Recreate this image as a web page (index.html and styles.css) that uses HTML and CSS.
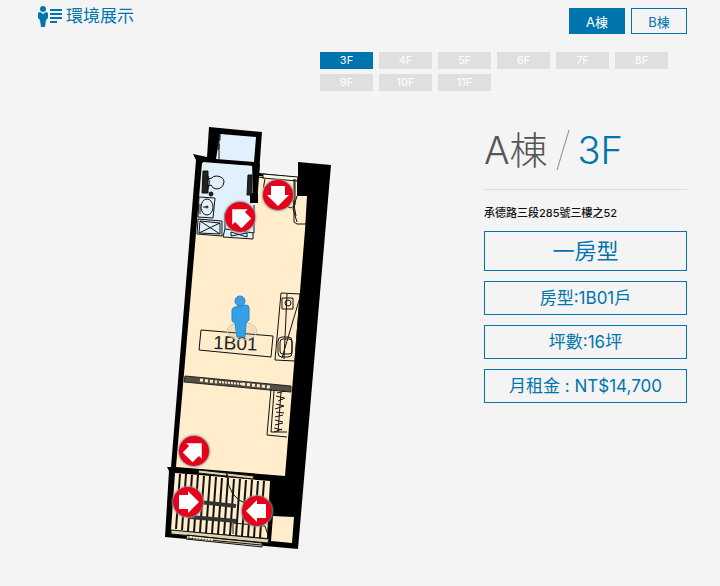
FILE: index.html
```html
<!DOCTYPE html>
<html lang="zh-Hant">
<head>
    <meta charset="UTF-8">
    <meta name="viewport" content="width=device-width, initial-scale=1.0">
    <title>環境展示</title>
    <link rel="stylesheet" href="styles.css">
</head>
<body>
    <div class="container">
        <header class="header">
            <h1 class="title">
                <svg class="title-icon" width="26" height="22" viewBox="0 0 26 22" aria-hidden="true">
                    <circle cx="5" cy="4" r="3"/>
                    <path d="M2 7l3 2 3-2q2 0 2 2v4l-2 2-1 7H3l-1-7-2-2V9q0-2 2-2z"/>
                    <path d="M12 4h12v2H12zM12 8h12v2H12zM12 12h12v2H12zM12 16h7v2h-7z"/>
                </svg>
                環境展示
            </h1>
            <nav class="buildings">
                <button type="button" class="building active">A棟</button>
                <button type="button" class="building">B棟</button>
            </nav>
        </header>

        <nav class="floors">
            <button type="button" class="floor active">3F</button>
            <button type="button" class="floor">4F</button>
            <button type="button" class="floor">5F</button>
            <button type="button" class="floor">6F</button>
            <button type="button" class="floor">7F</button>
            <button type="button" class="floor">8F</button>
            <button type="button" class="floor">9F</button>
            <button type="button" class="floor">10F</button>
            <button type="button" class="floor">11F</button>
        </nav>

        <main class="main">
            <div class="plan-area">
                <div class="plan">
                    <svg class="plan-drawing" viewBox="160 120 180 436" role="img" aria-label="1B01 平面圖">
                        <!-- walls -->
                        <path d="M209 127L262 132L259 173L298 177L298 162L331 165L298 549L165 537L169 471L167 467L171 467L196 160L193 154L207 157Z"/>
                        <!-- floors -->
                        <path class="room" d="M202 163L252 166L259 176L297 180L297 196L307 196L305 230L285 476L176 467Z"/>
                        <path class="wet" d="M220 134L256 137L254 162L216 159Z"/>
                        <path class="wet" d="M203 162L253 166L250 202L255 203L253 239L197 234Z"/>
                        <path d="M252 164h8l-3 39h-6v-10h2zM250 193h8v10h-8z"/>
                        <path class="room" d="M273 516L294 517L292 543L271 541Z"/>
                        <!-- bathroom -->
                        <g class="line">
                            <path d="M217 134h3v6h-3M216 144h3v5h-3M219 134v25"/>
                            <path class="dark" d="M203 171h5v22h-6zM248 175h4v20h-5z"/>
                            <path d="M208 176q3 6 0 13M208 179l4-1q0-2 5-2q7 1 7 6q-1 7-8 7q-4-1-5-4l-3 1"/>
                            <path d="M199 197l16 1l-2 20l-15-1zM200 204v10M203 207h4"/>
                            <ellipse cx="207" cy="207" rx="6" ry="8"/>
                            <circle class="dark" cx="211" cy="194" r="2"/>
                            <circle cx="207" cy="207" r="1"/>
                            <path d="M198 219l24 2v15l-25-2zM200 221l20 2v11l-21-1zM200 221l20 13M220 223l-21 10"/>
                            <path d="M225 213v16l29 4v-28M225 229l-2 8l30 2v-6M231 232l16 5v-4l-16 3z"/>
                        </g>
                        <!-- entrance -->
                        <g class="line">
                            <path class="light" d="M263 174l35 3l-1 4l-34-3z"/>
                            <path d="M265 179q-6 15 14 24l12 5l4-3V179M294 179v43l3 2h10M297 196l-4 13l4 13M258 177l6 1M293 200l3 16"/>
                        </g>
                        <!-- kitchen -->
                        <g class="line">
                            <path d="M281 293l19 1l-5 67l-20-1zM282 298h11v11h-11zM287 294l-3 65M300 297l-18 61"/>
                            <circle cx="288" cy="303" r="3"/>
                            <rect x="278" y="337" width="14" height="20" rx="4"/>
                            <rect x="280" y="339" width="12" height="15" rx="3"/>
                        </g>
                        <!-- partition and wardrobe -->
                        <path class="partition" d="M185 376L291 386L291 392L184 382Z"/>
                        <path class="dashes" d="M200 380L217 382M242 384L270 387"/>
                        <path class="dotted" d="M219 382L242 384"/>
                        <g class="line">
                            <path d="M271 389l-4 46l20 2M274 391l-3 41h16M281 392l-3 40"/>
                            <path d="M277 393l8-2M276 396l8 2M278 401l7-3M276 404l8 2M275 409l9-3M276 412l8 1M275 417l8-2M275 420l8 2M275 425l8-2M274 428l8 2M274 432l8-3"/>
                        </g>
                        <!-- balcony -->
                        <path class="room" d="M175 473L270 481L267 538L171 530Z"/>
                        <path class="deck" d="M180 474l-4 55M186 474l-4 56M192 475l-4 56M198 475l-4 57M204 476l-4 56M210 476l-4 57M216 477l-4 57M222 478l-4 56M228 478l-4 57M234 479l-4 56M240 479l-4 57M246 480l-4 56M252 480l-4 57M258 481l-4 56M264 481l-4 57"/>
                        <path class="rail" d="M199 502l37 4M190 517l46 4"/>
                        <path class="sill" d="M199 470l55 6l-1 3l-55-6zM171 530l98 9l-1 4l-97-9zM187 535l75 8v4l-76-8z"/>
                        <path class="line" d="M227 474q1 24 20 30M233 523l32 3l4 12M227 473l-1 5M233 523v11M188 538l73 7"/>
                        <path class="dotted" d="M190 537L213 540"/>
                        <!-- room label -->
                        <path class="line" d="M201 330L273 336L271 357L199 350Z"/>
                        <text class="room-label" x="213" y="349" transform="rotate(2 213 349)">1B01</text>
                        <!-- visitor -->
                        <ellipse class="shadow" cx="242" cy="331" rx="15" ry="9"/>
                        <g class="visitor">
                            <circle cx="240" cy="301" r="5"/>
                            <path d="M235 307l11-2q3 0 3 3v12l-3 3l-1 14h-8l-2-14l-3-2V310q0-2 3-3z"/>
                        </g>
                    </svg>
                    <button type="button" class="marker marker-entrance" aria-label="玄關">
                        <svg viewBox="-15 -15 30 30"><path class="turn-down" d="M11 0L0-11V-7H-9V7H0V11Z"/></svg>
                    </button>
                    <button type="button" class="marker marker-bath" aria-label="浴室">
                        <svg viewBox="-15 -15 30 30"><path class="turn-up-left" d="M11 0L0-11V-7H-9V7H0V11Z"/></svg>
                    </button>
                    <button type="button" class="marker marker-bedroom" aria-label="臥室">
                        <svg viewBox="-15 -15 30 30"><path class="turn-up-right" d="M11 0L0-11V-7H-9V7H0V11Z"/></svg>
                    </button>
                    <button type="button" class="marker marker-balcony-left" aria-label="陽台左側">
                        <svg viewBox="-15 -15 30 30"><path d="M11 0L0-11V-7H-9V7H0V11Z"/></svg>
                    </button>
                    <button type="button" class="marker marker-balcony-right" aria-label="陽台右側">
                        <svg viewBox="-15 -15 30 30"><path class="turn-left" d="M11 0L0-11V-7H-9V7H0V11Z"/></svg>
                    </button>
                </div>
            </div>

            <section class="info">
                <h2 class="unit">
                    <span>A棟</span>
                    <svg class="slash" width="14" height="42" viewBox="0 0 14 42" aria-hidden="true"><path d="M13 1L1 41"/></svg>
                    <span class="unit-floor">3F</span>
                </h2>
                <p class="address">承德路三段285號三樓之52</p>
                <ul class="details">
                    <li class="detail detail-type">一房型</li>
                    <li class="detail">房型:1B01戶</li>
                    <li class="detail">坪數:16坪</li>
                    <li class="detail">月租金 : NT$14,700</li>
                </ul>
            </section>
        </main>
    </div>
</body>
</html>
```
FILE: styles.css
```css
* {
    box-sizing: border-box;
}
body {
    margin: 0;
    background: #f4f4f4;
    color: #555;
    font-family: Inter, "Noto Sans CJK TC", sans-serif;
}
button {
    padding: 0;
    font-family: inherit;
    cursor: pointer;
}
.container {
    padding: 5px 33px 20px 38px;
}
.header {
    display: flex;
    justify-content: space-between;
    align-items: flex-start;
}
.title {
    display: flex;
    align-items: center;
    gap: 2px;
    margin: 0;
    color: #0075ad;
    font-size: 17px;
    font-weight: 400;
    line-height: 22px;
}
.title-icon {
    fill: #0075ad;
}
.buildings {
    display: flex;
    gap: 6px;
    padding-top: 3px;
}
.building {
    width: 56px;
    height: 26px;
    border: 1px solid #0075ad;
    background: transparent;
    color: #0075ad;
    font-size: 13px;
}
.floors {
    display: flex;
    flex-wrap: wrap;
    gap: 5px 6px;
    width: 367px;
    margin: 18px 0 0 auto;
}
.floor {
    width: 53px;
    height: 17px;
    border: 0;
    background: #dfdfdf;
    color: #fff;
    font-size: 11px;
    line-height: 17px;
}
.building.active,
.floor.active {
    background: #0075ad;
    color: #fff;
}
.main {
    display: grid;
    grid-template-columns: 1fr 203px;
    padding-top: 29px;
}

/* floor plan */
.plan-area {
    display: flex;
    justify-content: center;
    padding-right: 22px;
}
.plan {
    position: relative;
    width: 180px;
    align-self: flex-start;
}
.plan-drawing {
    display: block;
    width: 100%;
}
.room {
    fill: #ffedcb;
}
.wet {
    fill: #e1f1fb;
}
.line {
    fill: none;
    stroke: #111;
    stroke-width: 1;
}
.dark {
    fill: #222;
}
.light {
    fill: #fff8ea;
}
.partition {
    fill: #555044;
    stroke: #222;
}
.dashes,
.dotted {
    fill: none;
    stroke: #ffedcb;
    stroke-width: 3;
    stroke-dasharray: 3 2;
}
.dotted {
    stroke-width: 2;
    stroke-dasharray: 2 1;
}
.deck {
    stroke: #111;
    stroke-width: 2;
}
.rail {
    stroke: #333;
    stroke-width: 4;
}
.sill {
    fill: #ded3b3;
    stroke: #111;
    stroke-width: 1;
}
.room-label {
    fill: #222;
    font-family: "Liberation Sans", Arial, sans-serif;
    font-size: 19px;
}
.shadow {
    fill: #aaa08a;
    fill-opacity: 0.2;
    stroke: #d8ccb0;
}
.visitor {
    fill: #35a0e5;
    stroke: #2588c8;
    stroke-width: 1;
}
.marker {
    position: absolute;
    width: 30px;
    height: 30px;
    border: 0;
    border-radius: 50%;
    background: #e60019;
    box-shadow: 0 0 2px 1px #8995a0;
    transform: translate(-50%, -50%);
}
.marker svg {
    display: block;
    fill: #fff;
}
.turn-down {
    transform: rotate(90deg);
}
.turn-left {
    transform: rotate(180deg);
}
.turn-up-left {
    transform: rotate(225deg);
}
.turn-up-right {
    transform: rotate(-45deg);
}
.marker-entrance {
    left: 118px;
    top: 75px;
}
.marker-bath {
    left: 80px;
    top: 97px;
}
.marker-bedroom {
    left: 34px;
    top: 331px;
}
.marker-balcony-left {
    left: 28px;
    top: 382px;
}
.marker-balcony-right {
    left: 97px;
    top: 391px;
}

/* unit details */
.unit {
    display: flex;
    align-items: center;
    gap: 8px;
    margin: 0;
    padding: 8px 0 17px;
    border-bottom: 1px solid #ddd;
    font-size: 38px;
    font-weight: 300;
    line-height: 44px;
}
.unit-floor {
    color: #0075ad;
}
.slash {
    fill: none;
    stroke: #888;
}
.address {
    margin: 14px 0 8px;
    color: #111;
    font-size: 11px;
    font-weight: 500;
    line-height: 19px;
}
.details {
    display: grid;
    gap: 10px;
    margin: 0;
    padding: 0;
    list-style: none;
}
.detail {
    border: 1px solid #0075ad;
    color: #0075ad;
    font-size: 17px;
    line-height: 32px;
    text-align: center;
}
.detail-type {
    font-size: 22px;
    line-height: 38px;
}
```
